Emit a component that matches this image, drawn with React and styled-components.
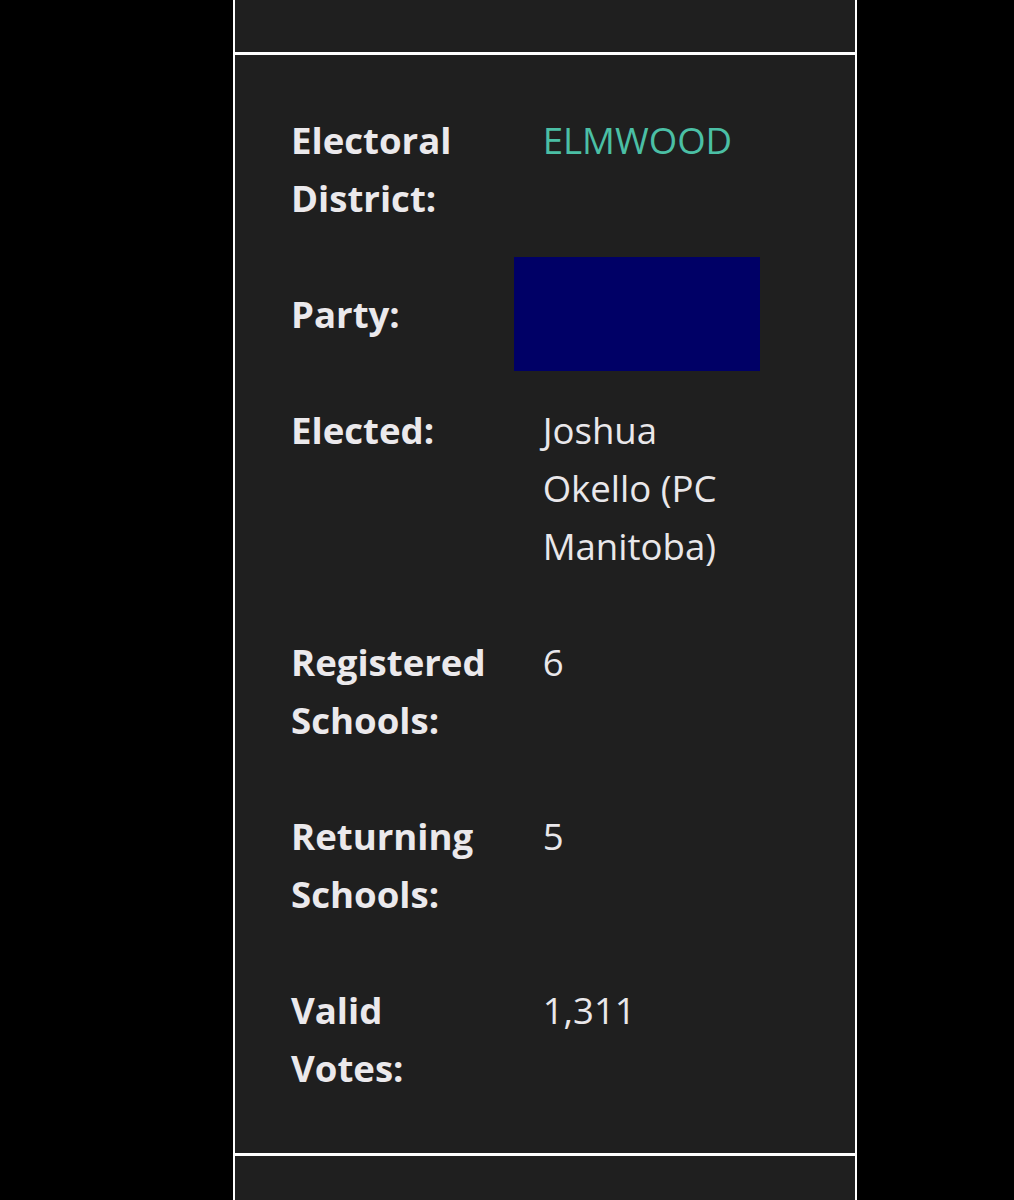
import React from "react";
import styled, { createGlobalStyle } from "styled-components";

const GlobalStyle = createGlobalStyle`
  html, body {
    margin: 0;
    padding: 0;
    background: #000;
  }
  body {
    font-family: "Open Sans", "Liberation Sans", sans-serif;
  }
`;

const rows = [
  { label: "Electoral District:", value: "ELMWOOD", link: true },
  { label: "Party:", swatch: "#000066" },
  { label: "Elected:", value: "Joshua Okello (PC Manitoba)" },
  { label: "Registered Schools:", value: "6" },
  { label: "Returning Schools:", value: "5" },
  { label: "Valid Votes:", value: "1,311" },
];

const App = () => {
  return (
    <>
      <GlobalStyle />
      <Panel>
        <Block $height={52} />
        <Divider />
        <DetailSection>
          <InfoTable>
            <tbody>
              {rows.map((row) => (
                <tr key={row.label}>
                  <Label>{row.label}</Label>
                  {row.swatch ? (
                    <Value $bg={row.swatch}>&nbsp;</Value>
                  ) : (
                    <Value $link={row.link}>{row.value}</Value>
                  )}
                </tr>
              ))}
            </tbody>
          </InfoTable>
        </DetailSection>
        <Divider />
        <Block $height={60} />
      </Panel>
    </>
  );
};

const Panel = styled.div`
  margin-left: 233px;
  width: 624px;
  box-sizing: border-box;
  border-left: 2px solid #fff;
  border-right: 2px solid #fff;
  background: #1f1f1f;
  display: flex;
  flex-direction: column;
`;

const Block = styled.div`
  height: ${(p) => p.$height}px;
`;

const Divider = styled.div`
  height: 3px;
  background: #fff;
`;

const DetailSection = styled.section`
  padding: 26px 0 26px 26px;
`;

const InfoTable = styled.table`
  border-collapse: separate;
  border-spacing: 2px;
  font-size: 36.6px;
  line-height: 58px;
  color: #ebe9ec;
`;

const Label = styled.th`
  box-sizing: border-box;
  width: 248px;
  padding: 28px 26px 28px 28px;
  text-align: left;
  vertical-align: top;
  font-weight: 700;
  color: #ebe9ec;
`;

const Value = styled.td`
  box-sizing: border-box;
  width: 246px;
  padding: 28px 28px 28px 29px;
  vertical-align: top;
  font-weight: 400;
  color: ${(p) => (p.$link ? "#4bbfa5" : "#e9e7ea")};
  background: ${(p) => p.$bg || "transparent"};
`;

export default App;
